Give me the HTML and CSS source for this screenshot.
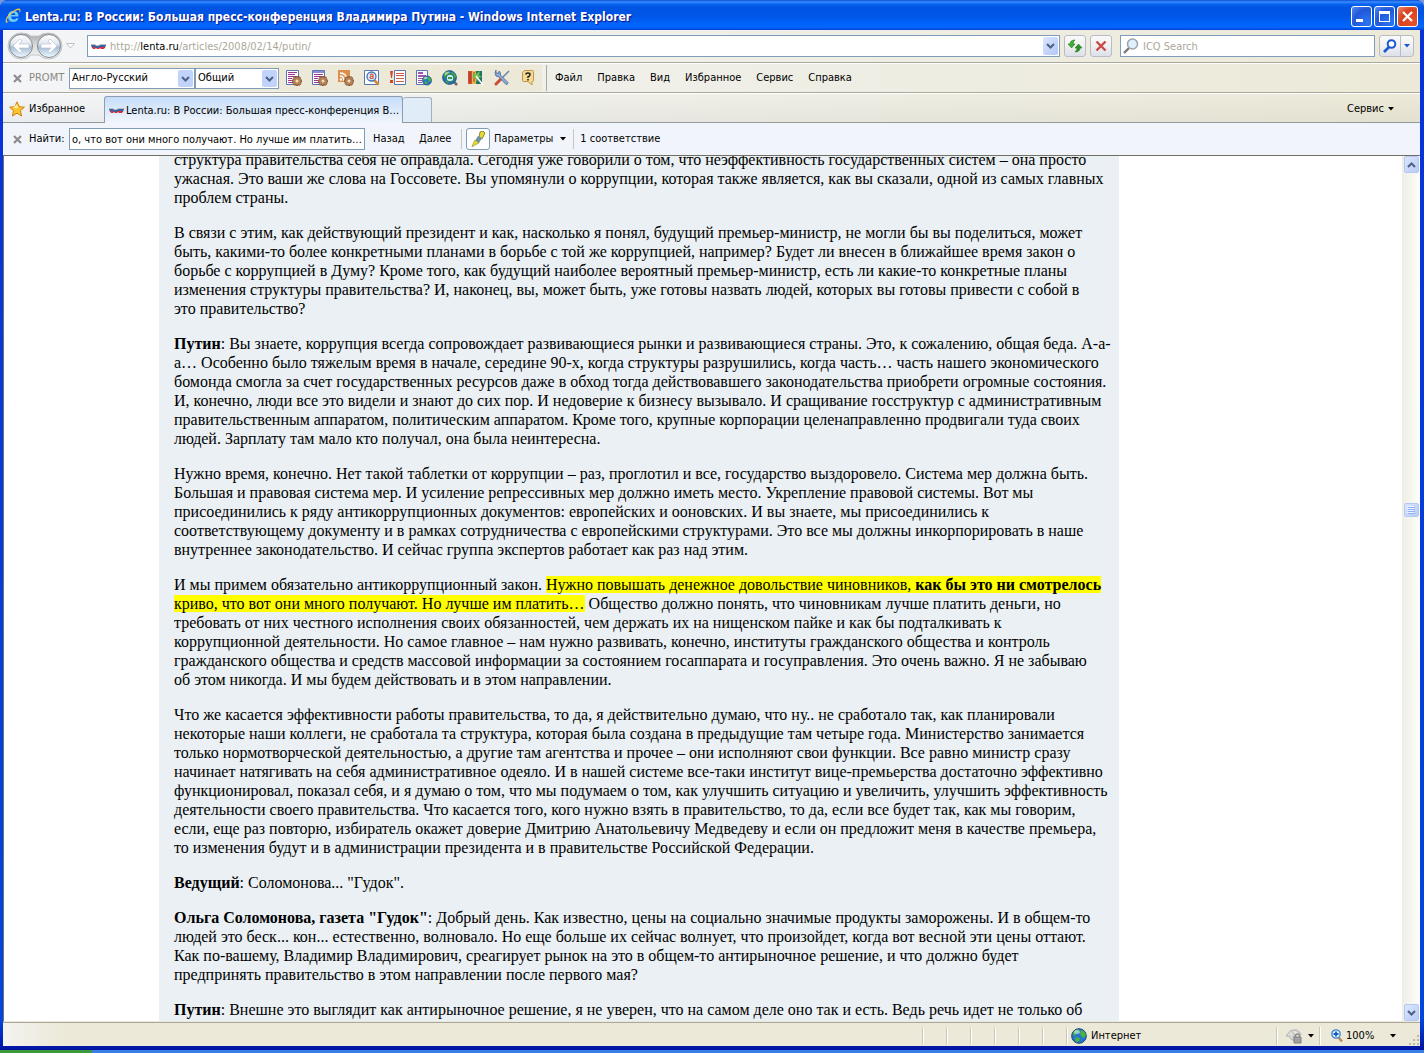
FILE: index.html
```html
<!DOCTYPE html>
<html lang="ru">
	<head>
		<meta charset="UTF-8" />
		<meta name="viewport" content="width=device-width, initial-scale=1.0" />
		<title>Lenta.ru: В России: Большая пресс-конференция Владимира Путина</title>
		<link rel="stylesheet" href="styles.css">
	</head>

	<body>
		<!-- formes réutilisées par plusieurs icônes -->
		<svg class="defs" aria-hidden="true">
			<symbol id="gear" viewBox="0 0 10 10">
				<path d="M4 0h2v1.500l1.500-.8L8.800 2 8 3.700l2 .3v2l-1.700.4.7 1.500-1.500 1.500L6 8.500V10H4V8.500l-1.600.8L1 7.800l.8-1.500L0 6V4l1.700-.4L1 2.200 2.300.8 4 1.500z" fill="#b58254" stroke="#6b4526" stroke-width=".6" />
				<circle cx="5" cy="5" r="1.500" fill="#f2dcc0" />
			</symbol>
			<symbol id="flag" viewBox="0 0 15 7">
				<path d="M0 1h4l1 1h3l1-1h6v2H0z" fill="#b9c0c8" />
				<path d="M0 2h4l1 1h3l1-1h6l-1 3H1z" fill="#3b60a2" />
				<path d="M1 4h3l1 1h3l1-1h5l-1 2h-3l-1-1-1 1H6L5 5 4 6H2z" fill="#d6303a" />
			</symbol>
			<symbol id="close" viewBox="0 0 9 9">
				<path d="M1 1l7 7M8 1L1 8" stroke="#8c8c8c" stroke-width="2.200" />
			</symbol>
			<symbol id="down" viewBox="0 0 6 4">
				<path d="M0 0h6L3 3.500z" fill="currentColor" />
			</symbol>
			<symbol id="globe" viewBox="0 0 16 16">
				<circle cx="8" cy="8" r="7.300" fill="#2873cd" stroke="#174574" />
				<path d="M2 5q2-4 6-3.500L7 4 5 5 4 8 2 7zM10 2q4 1 5 5l-2 3-2-1-2-3zM5 9l4 1-1 3-2 1.500-2-2z" fill="#47b53c" />
				<ellipse cx="6" cy="4" rx="3" ry="2" fill="#fff" opacity=".5" />
			</symbol>
		</svg>

		<div class="window">
			<header class="titlebar">
				<svg class="title-logo" viewBox="0 0 16 16">
					<path d="M13.500 8.500H6q.5 3 3 3 1.500 0 2.200-1.200h2.300Q12.500 14 8.500 14 3 14 3 8.500T8.500 3q5.200 0 5 5.500zM6 7h4.500Q10.300 5 8.500 5 6.500 5 6 7z" fill="#6ccbf7" fill-rule="evenodd" />
					<path d="M4.500 13Q1 16 .5 13.500.5 9 6 4.500T14.500.5Q16.500 2 14.500 5.500 15 3 14 2 11.500 1.500 7 5T1.700 12.500Q2 14.500 4.500 13z" fill="#fbc63d" />
				</svg>
				<h1>Lenta.ru: В России: Большая пресс-конференция Владимира Путина - Windows Internet Explorer</h1>
				<button class="win-btn" aria-label="Свернуть"><svg viewBox="0 0 19 19"><path d="M4 12h7v3H4z" fill="#fff" /></svg></button>
				<button class="win-btn" aria-label="Развернуть"><svg viewBox="0 0 19 19"><path d="M4 4h11v11H4zM5 7v7h9V7z" fill="#fff" fill-rule="evenodd" /></svg></button>
				<button class="win-btn win-close" aria-label="Закрыть"><svg viewBox="0 0 19 19"><path d="M5 5l9 9M14 5l-9 9" stroke="#fff" stroke-width="2.200" /></svg></button>
			</header>

			<form class="bar address-bar">
				<svg class="back-forward" viewBox="0 0 56 28">
					<defs>
						<linearGradient id="ball" x2="0" y2="1">
							<stop offset="0" stop-color="#ffffff" />
							<stop offset=".4" stop-color="#e3e9ef" />
							<stop offset=".55" stop-color="#a9bed6" />
							<stop offset="1" stop-color="#f0fbff" />
						</linearGradient>
						<linearGradient id="frame" x2="0" y2="1">
							<stop offset="0" stop-color="#a4a6a8" />
							<stop offset=".5" stop-color="#dcdede" />
							<stop offset="1" stop-color="#f4f4f4" />
						</linearGradient>
					</defs>
					<path d="M14 1q7 0 10 3h8q3-3 10-3a13 13 0 010 26q-7 0-10-4h-8q-3 4-10 4A13 13 0 0114 1z" fill="url(#frame)" stroke="#c4c6c8" />
					<circle cx="14" cy="14" r="11.500" fill="url(#ball)" stroke="#838b92" />
					<circle cx="42" cy="14" r="11.500" fill="url(#ball)" stroke="#838b92" />
					<path d="M6 14l7-7 2 2-3 3h10v4H12l3 3-2 2zM50 14l-7-7-2 2 3 3H34v4h10l-3 3 2 2z" fill="#fff" stroke="#b3c0cd" stroke-width=".6" />
				</svg>
				<svg class="history" viewBox="0 0 9 6"><path d="M.5.5h8l-4 4.500z" fill="#fff" stroke="#c2c2c2" /></svg>
				<div class="url">
					<svg class="flag"><use href="#flag" /></svg>
					<a href="#">http://<b>lenta.ru</b>/articles/2008/02/14/putin/</a>
					<button type="button" class="drop" aria-label="Журнал адресов"><svg viewBox="0 0 9 6"><path d="M1 1l3.500 3.500L8 1" fill="none" stroke="#4d6185" stroke-width="2" /></svg></button>
				</div>
				<button type="button" class="nav-btn" aria-label="Обновить">
					<svg viewBox="0 0 16 16"><path d="M1 6h2q0-4 5-4-2 1.500-2 4h2l-3.500 4z" fill="#3fae38" stroke="#1c7d1c" stroke-width=".6" /><path d="M15 10h-2q0 4-5 4 2-1.500 2-4H8l3.500-4z" fill="#2c8f28" stroke="#1c7d1c" stroke-width=".6" /></svg>
				</button>
				<button type="button" class="nav-btn" aria-label="Остановить">
					<svg viewBox="0 0 16 16"><path d="M3.500 3.500l9 9M12.500 3.500l-9 9" stroke="#c94a44" stroke-width="2.400" /></svg>
				</button>
				<div class="search">
					<svg viewBox="0 0 16 16"><path d="M1 15l5-5" stroke="#777" stroke-width="2.400" /><circle cx="9.500" cy="6" r="5" fill="#dff1fc" stroke="#9ba3ab" stroke-width="1.500" /></svg>
					<input type="text" placeholder="ICQ Search" aria-label="Поиск">
				</div>
				<div class="search-btns">
					<button type="button" aria-label="Искать"><svg viewBox="0 0 14 14"><path d="M1 13l5-5" stroke="#1c57d8" stroke-width="2.600" /><circle cx="8.500" cy="5" r="3.800" fill="#fff" stroke="#1c57d8" stroke-width="2" /></svg></button>
					<button type="button" class="narrow" aria-label="Параметры поиска"><svg class="down"><use href="#down" /></svg></button>
				</div>
			</form>

			<div class="bar tool-bar">
				<button class="plain" aria-label="Закрыть панель"><svg class="close"><use href="#close" /></svg></button>
				<label class="promt" for="lang">PROMT</label>
				<div class="promt-tools">
					<select id="lang">
						<option>Англо-Русский</option>
					</select>
					<select id="theme" aria-label="Тематика">
						<option>Общий</option>
					</select>
					<div class="icons">
						<button class="plain" aria-label="Перевести"><svg viewBox="0 0 16 16"><path d="M.5.5h12v14H.5z" fill="#fff" stroke="#5676b5" /><path d="M2 2.500h9M2 4.500h7M2 6.500h9M2 8.500h4M2 10.500h4M2 12.500h5" stroke="#a0348f" /><use href="#gear" x="6" y="6" width="10" height="10" /></svg></button>
						<button class="plain" aria-label="Перевести страницу"><svg viewBox="0 0 16 16"><path d="M.5.5h12v14H.5z" fill="#fff" stroke="#5676b5" /><path d="M1 1h11v2H1z" fill="#8b8fd0" /><path d="M2 4.500h9M2 6.500h9M2 8.500h4M2 10.500h4M2 12.500h5" stroke="#a0348f" /><use href="#gear" x="6" y="6" width="10" height="10" /></svg></button>
						<button class="plain" aria-label="Перевести ленту"><svg viewBox="0 0 16 16"><path d="M0 0h12v12H0z" fill="#de8f4c" /><path d="M2 3q7 0 7 8M2 6q4 0 4 5" stroke="#fff" stroke-width="1.500" fill="none" /><circle cx="3" cy="9.500" r="1.300" fill="#fff" /><use href="#gear" x="6" y="6" width="10" height="10" /></svg></button>
						<button class="plain" aria-label="Найти перевод"><svg viewBox="0 0 16 16"><path d="M.5.5h14v14H.5z" fill="#fff" stroke="#5676b5" /><path d="M10 10l4.500 4.500" stroke="#d98a32" stroke-width="2.500" /><circle cx="7.500" cy="6.500" r="4.500" fill="#d7edfc" stroke="#4674ae" stroke-width="1.300" /><path d="M6 5q1.500-1.500 3 0v3.500H6.500q-1-1 0-2H9" fill="none" stroke="#d95542" stroke-width="1.200" /></svg></button>
						<button class="plain" aria-label="Незнакомые слова"><svg viewBox="0 0 16 16"><path d="M4.500.5h11v14h-11z" fill="#fff" stroke="#5676b5" /><path d="M6 3.500h8M6 5.500h8M6 8.500h8M6 11.500h8" stroke="#d15842" /><path d="M0 1h3l-1 7H1zM0 10h3v3H0z" fill="#cf482d" /></svg></button>
						<button class="plain" aria-label="Веб-перевод"><svg viewBox="0 0 16 16"><path d="M.5.5h11v14H.5z" fill="#fff" stroke="#5676b5" /><path d="M2 2h5v2H2zM2 5h8v2H2zM2 8h5v1H2zM2 10h4v1H2zM2 12h4v1H2z" fill="#a455b0" /><use href="#globe" x="6" y="5" width="10" height="11" /></svg></button>
						<button class="plain" aria-label="Поиск в Интернете"><svg viewBox="0 0 16 16"><path d="M11 11l4 4" stroke="#6b6b6b" stroke-width="2.500" /><use href="#globe" width="15" height="15" /><circle cx="8" cy="8" r="4" fill="#c6eaf7" stroke="#23765d" stroke-width="1.500" /><path d="M6 8h4" stroke="#389a42" stroke-width="2" /></svg></button>
						<button class="plain" aria-label="Словари"><svg viewBox="0 0 16 16"><path d="M0 1h4v13H0z" fill="#cf4c35" /><path d="M4 1h4v13H4z" fill="#e6b74a" /><path d="M8 1h6v13H8z" fill="#1f7468" /><path d="M2 2v10M6 2v10" stroke="#9a3d2a" /><path d="M5 3l3 1 4-3-1 4 3 2-4 1-1 4-2-4-3-1 2-2z" fill="#6fbe53" /><path d="M8 6l7 9" stroke="#fff" stroke-width="1.500" /></svg></button>
						<button class="plain" aria-label="Настройка"><svg viewBox="0 0 16 16"><path d="M15 1L7 9" stroke="#6d86a7" stroke-width="1.600" /><path d="M7 9l-5 5" stroke="#c94c38" stroke-width="3" stroke-linecap="round" /><path d="M2 0v3h3V1q2 1 1.500 4L14 12.500q0 2-2 2L5 7Q1 7 1 3z" fill="#8faad0" stroke="#4b6a97" stroke-width=".8" /></svg></button>
						<button class="plain" aria-label="Помощь"><svg viewBox="0 0 16 16"><path d="M4.500.5h8q1 0 1 1v9q0 1-1 1H12V15l-4-3.500H3.500q-1 0-1-1v-8z" fill="#f7da91" stroke="#bb964f" /><path d="M6 4.500Q6 3 8 3t2 1.500T8 7v1M8 9v1.500" fill="none" stroke="#222" stroke-width="1.600" /></svg></button>
					</div>
				</div>
				<nav class="menu">
					<a href="#">Файл</a>
					<a href="#">Правка</a>
					<a href="#">Вид</a>
					<a href="#">Избранное</a>
					<a href="#">Сервис</a>
					<a href="#">Справка</a>
				</nav>
			</div>

			<div class="bar tab-bar">
				<button class="plain favorites">
					<svg viewBox="0 0 16 16"><path d="M8 .8l2.100 4.900 5.300.5-4 3.500 1.200 5.300L8 12.200 3.400 15l1.200-5.300-4-3.500 5.300-.5z" fill="#ffc52d" stroke="#cf8115" /><path d="M8 3l1 4H4z" fill="#fff0a6" /></svg>
					Избранное
				</button>
				<a class="tab" href="#"><svg class="flag"><use href="#flag" /></svg>Lenta.ru: В России: Большая пресс-конференция В…</a>
				<button class="new-tab" aria-label="Новая вкладка"></button>
				<button class="plain service">Сервис <svg class="down"><use href="#down" /></svg></button>
			</div>

			<form class="bar find-bar">
				<button type="button" class="plain" aria-label="Закрыть поиск"><svg class="close"><use href="#close" /></svg></button>
				<label for="find">Найти:</label>
				<input id="find" type="text" value="о, что вот они много получают. Но лучше им платить…">
				<button type="button" class="plain prev">Назад</button>
				<button type="button" class="plain next">Далее</button>
				<button type="button" class="marker" aria-label="Выделить">
					<svg viewBox="0 0 16 16"><path d="M10 1l3-1 2 2-3 6-3-2z" fill="#ead92e" stroke="#66772f" stroke-width=".8" /><path d="M8 5l4 2-3 5-4-2z" fill="#6c93a2" /><path d="M5 9l4 3-4 2-3 2 1-3z" fill="#ead92e" stroke="#8a8a28" stroke-width=".6" /></svg>
				</button>
				<button type="button" class="plain params">Параметры <svg class="down"><use href="#down" /></svg></button>
				<output for="find">1 соответствие</output>
			</form>

			<div class="view">
				<main>
					<article>
						<p>структура правительства себя не оправдала. Сегодня уже говорили о том, что неэффективность государственных систем – она просто ужасная. Это ваши же слова на Госсовете. Вы упомянули о коррупции, которая также является, как вы сказали, одной из самых главных проблем страны.</p>
						<p>В связи с этим, как действующий президент и как, насколько я понял, будущий премьер-министр, не могли бы вы поделиться, может быть, какими-то более конкретными планами в борьбе с той же коррупцией, например? Будет ли внесен в ближайшее время закон о борьбе с коррупцией в Думу? Кроме того, как будущий наиболее вероятный премьер-министр, есть ли какие-то конкретные планы изменения структуры правительства? И, наконец, вы, может быть, уже готовы назвать людей, которых вы готовы привести с собой в<br>это правительство?</p>
						<p><b>Путин</b>: Вы знаете, коррупция всегда сопровождает развивающиеся рынки и развивающиеся страны. Это, к сожалению, общая беда. А-а-<br>а… Особенно было тяжелым время в начале, середине 90-х, когда структуры разрушились, когда часть… часть нашего экономического<br>бомонда смогла за счет государственных ресурсов даже в обход тогда действовавшего законодательства приобрети огромные состояния.<br>И, конечно, люди все это видели и знают до сих пор. И недоверие к бизнесу вызывало. И сращивание госструктур с административным<br>правительственным аппаратом, политическим аппаратом. Кроме того, крупные корпорации целенаправленно продвигали туда своих<br>людей. Зарплату там мало кто получал, она была неинтересна.</p>
						<p>Нужно время, конечно. Нет такой таблетки от коррупции – раз, проглотил и все, государство выздоровело. Система мер должна быть. Большая и правовая система мер. И усиление репрессивных мер должно иметь место. Укрепление правовой системы. Вот мы присоединились к ряду антикоррупционных документов: европейских и ооновских. И вы знаете, мы присоединились к соответствующему документу и в рамках сотрудничества с европейскими структурами. Это все мы должны инкорпорировать в наше внутреннее законодательство. И сейчас группа экспертов работает как раз над этим.</p>
						<p>И мы примем обязательно антикоррупционный закон. <mark>Нужно повышать денежное довольствие чиновников, <b>как бы это ни смотрелось</b> криво, что вот они много получают. Но лучше им платить…</mark> Общество должно понять, что чиновникам лучше платить деньги, но требовать от них честного исполнения своих обязанностей, чем держать их на нищенском пайке и как бы подталкивать к<br>коррупционной деятельности. Но самое главное – нам нужно развивать, конечно, институты гражданского общества и контроль<br>гражданского общества и средств массовой информации за состоянием госаппарата и госуправления. Это очень важно. Я не забываю<br>об этом никогда. И мы будем действовать и в этом направлении.</p>
						<p>Что же касается эффективности работы правительства, то да, я действительно думаю, что ну.. не сработало так, как планировали некоторые наши коллеги, не сработала та структура, которая была создана в предыдущие там четыре года. Министерство занимается только нормотворческой деятельностью, а другие там агентства и прочее – они исполняют свои функции. Все равно министр сразу начинает натягивать на себя административное одеяло. И в нашей системе все-таки институт вице-премьерства достаточно эффективно функционировал, показал себя, и я думаю о том, что мы подумаем о том, как улучшить ситуацию и увеличить, улучшить эффективность деятельности своего правительства. Что касается того, кого нужно взять в правительство, то да, если все будет так, как мы говорим, если, еще раз повторю, избиратель окажет доверие Дмитрию Анатольевичу Медведеву и если он предложит меня в качестве премьера, то изменения будут и в администрации президента и в правительстве Российской Федерации.</p>
						<p><b>Ведущий</b>: Соломонова... "Гудок".</p>
						<p><b>Ольга Соломонова, газета "Гудок"</b>: Добрый день. Как известно, цены на социально значимые продукты заморожены. И в общем-то людей это беск... кон... естественно, волновало. Но еще больше их сейчас волнует, что произойдет, когда вот весной эти цены оттают. Как по-вашему, Владимир Владимирович, среагирует рынок на это в общем-то антирыночное решение, и что должно будет<br>предпринять правительство в этом направлении после первого мая?</p>
						<p><b>Путин</b>: Внешне это выглядит как антирыночное решение, я не уверен, что на самом деле оно так и есть. Ведь речь идет не только об</p>
					</article>
				</main>
				<div class="scrollbar">
					<button aria-label="Вверх"><svg viewBox="0 0 9 6"><path d="M1 5l3.500-3.500L8 5" fill="none" stroke="#4d6185" stroke-width="2" /></svg></button>
					<div class="track-before"></div>
					<div class="thumb"><svg viewBox="0 0 8 8"><path d="M0 .5h7M0 2.500h7M0 4.500h7M0 6.500h7" stroke="#eef4fe" /><path d="M1 1.500h7M1 3.500h7M1 5.500h7M1 7.500h7" stroke="#8cb0f8" /></svg></div>
					<div class="track-after"></div>
					<button aria-label="Вниз"><svg viewBox="0 0 9 6"><path d="M1 1l3.500 3.500L8 1" fill="none" stroke="#4d6185" stroke-width="2" /></svg></button>
				</div>
			</div>

			<footer class="status">
				<i></i><i></i><i></i><i></i><i></i><i></i>
				<span class="zone"><svg viewBox="0 0 16 16"><use href="#globe" /></svg>Интернет</span>
				<button class="plain protect" aria-label="Защита"><svg viewBox="0 0 16 16"><path d="M0 8l5-6 5 6H7q0 3 2 5-5-1-6-5z" fill="#dcdcdc" stroke="#b0b0b0" /><path d="M6 3q5-3 9 4" fill="none" stroke="#c4c4c4" stroke-width="2" /><path d="M8 9h7v6H8z" fill="#a2a2a2" stroke="#808080" /><path d="M9.500 9V7q2-2 4 0v2" fill="none" stroke="#8a8a8a" stroke-width="1.500" /></svg><svg class="down"><use href="#down" /></svg></button>
				<button class="plain zoom"><svg viewBox="0 0 12 14"><path d="M7 8l4 4.500" stroke="#b98b55" stroke-width="2.500" /><circle cx="5" cy="5" r="4.200" fill="#e5f4ff" stroke="#3b82ce" stroke-width="1.300" /><path d="M2.500 5h5M5 2.500v5" stroke="#165cc0" stroke-width="1.800" /></svg>100%<svg class="down"><use href="#down" /></svg></button>
				<svg class="grip" viewBox="0 0 12 12"><path d="M9 1h2v2H9zM5 5h2v2H5zM9 5h2v2H9zM1 9h2v2H1zM5 9h2v2H5zM9 9h2v2H9z" fill="#bdb8a4" /></svg>
			</footer>
		</div>

		<div class="taskbar"><span></span></div>
	</body>
</html>
```
FILE: styles.css
```css
* {
	box-sizing: border-box;
}
body {
	display: flex;
	flex-direction: column;
	height: 100vh;
	margin: 0;
	overflow: hidden;
	background: #7a96df;
	font-family: "DejaVu Sans Condensed", "DejaVu Sans", sans-serif;
	font-size: 11px;
	line-height: 14px;
	color: #000;
}
svg {
	display: block;
	flex: none;
}
button,
input,
select {
	font: inherit;
	color: inherit;
	margin: 0;
}
a {
	color: inherit;
	text-decoration: none;
}
.defs {
	position: absolute;
	width: 0;
	height: 0;
}
.window {
	display: flex;
	flex-direction: column;
	flex: 1;
	min-height: 0;
	padding: 0 4px 4px 3px;
	background: linear-gradient(#0831d9, #0046e0 97%, #0013a0);
	border-radius: 8px 8px 0 0;
}

/* barre de titre */
.titlebar {
	display: flex;
	align-items: center;
	gap: 2px;
	height: 30px;
	flex: none;
	margin: 0 -4px 0 -3px;
	padding: 2px 6px 0 5px;
	border-radius: 8px 8px 0 0;
	background: linear-gradient(#0b50cf 0, #3a8bff 2px, #0866f0 4px, #0054e3 7px, #0055e5 15px, #0066ff 25px, #0260f5 28px, #003dd7 30px);
}
.title-logo {
	width: 16px;
	height: 16px;
}
.titlebar h1 {
	flex: 1;
	margin: 2px 0 0 2px;
	font-size: 12px;
	line-height: 16px;
	color: #fff;
	text-shadow: 1px 1px 1px #0f1089;
	white-space: nowrap;
	overflow: hidden;
}
.win-btn {
	width: 21px;
	height: 21px;
	padding: 0;
	border: 1px solid #fff;
	border-radius: 3px;
	background: radial-gradient(circle at 80% 80%, #2a75f5, #2257d8 60%, #5a8cf0);
}
.win-close {
	background: radial-gradient(circle at 80% 80%, #e8502a, #d9431f 60%, #ee8f74);
}

/* barres d'outils */
.bar {
	display: flex;
	align-items: center;
	flex: none;
	background: linear-gradient(90deg, #f3f5f8, #f0f0ea 40%, #ece9d8);
	white-space: nowrap;
}
.plain {
	display: flex;
	align-items: center;
	padding: 0;
	border: 0;
	background: none;
}
.flag {
	width: 15px;
	height: 7px;
}
.close {
	width: 9px;
	height: 9px;
}
.down {
	width: 6px;
	height: 4px;
}
.address-bar {
	height: 33px;
	padding: 0 6px 0 4px;
	border-bottom: 1px solid #aca899;
}
.back-forward {
	width: 56px;
	height: 28px;
}
.history {
	width: 9px;
	height: 6px;
	margin: 0 12px 0 3px;
}
.url,
.search {
	display: flex;
	align-items: center;
	height: 22px;
	border: 1px solid #7f9db9;
	background: #fff;
}
.url {
	flex: 1;
	padding: 0 1px 0 3px;
	gap: 4px;
	color: #aca899;
}
.url a {
	flex: 1;
	padding-top: 1px;
}
.url b {
	font-weight: normal;
	color: #000;
}
.drop {
	display: grid;
	place-items: center;
	width: 15px;
	height: 18px;
	padding: 0;
	border: 0;
	border-radius: 2px;
	background: linear-gradient(135deg, #dbe5fd, #b3c8f7);
}
.drop svg,
.scrollbar button svg {
	width: 9px;
	height: 6px;
}
.nav-btn,
.search-btns button {
	display: grid;
	place-items: center;
	width: 22px;
	height: 22px;
	padding: 0;
	border: 1px solid #b9bcc4;
	border-radius: 3px;
	background: linear-gradient(#fafafa, #f0f0f0 50%, #dde0ea);
}
.nav-btn {
	margin-left: 4px;
}
.nav-btn svg {
	width: 16px;
	height: 16px;
}
.search {
	width: 255px;
	margin: 0 4px 0 8px;
	padding-left: 2px;
	gap: 4px;
}
.search svg {
	width: 16px;
	height: 16px;
}
.search input {
	flex: 1;
	min-width: 0;
	padding: 1px 0 0;
	border: 0;
	background: none;
}
.search input::placeholder {
	color: #aca899;
}
.search-btns {
	display: flex;
}
.search-btns svg {
	width: 14px;
	height: 14px;
}
.search-btns button:first-child {
	border-radius: 3px 0 0 3px;
}
.search-btns .narrow {
	width: 14px;
	margin-left: -1px;
	border-radius: 0 3px 3px 0;
	color: #1c57d8;
}
.search-btns .down {
	width: 6px;
	height: 4px;
}
.tool-bar {
	height: 30px;
	padding-left: 10px;
	border-top: 1px solid #fff;
	border-bottom: 1px solid #aca899;
}
.promt {
	width: 37px;
	margin: 0 3px 0 7px;
	color: #8a887e;
}
.promt-tools {
	display: flex;
	align-items: center;
	height: 26px;
	padding-right: 6px;
	background: #ece9d8;
}
select {
	width: 126px;
	height: 21px;
	padding: 0 18px 0 2px;
	border: 1px solid #7f9db9;
	border-radius: 0;
	appearance: none;
	background: #fff url("data:image/svg+xml,%3Csvg xmlns='http://www.w3.org/2000/svg' width='15' height='17'%3E%3Crect width='15' height='17' rx='2' fill='%23c1d3fb'/%3E%3Cpath d='M4 7l3.500 3.500L11 7' fill='none' stroke='%234d6185' stroke-width='2'/%3E%3C/svg%3E") no-repeat right 1px center;
}
#theme {
	width: 84px;
}
.icons {
	display: flex;
	gap: 10px;
	padding-left: 7px;
}
.icons svg {
	width: 16px;
	height: 16px;
}
.menu {
	display: flex;
	gap: 15px;
	margin-left: 4px;
	padding: 6px 8px;
	border-left: 1px solid #aca899;
}

/* onglets */
.tab-bar {
	height: 30px;
	align-items: stretch;
	border-top: 1px solid #fff;
	background: linear-gradient(transparent, #0000000a), linear-gradient(90deg, #f3f5f8, #f0f0ea 40%, #ece9d8);
	box-shadow: inset 0 -1px #919b9c;
}
.favorites {
	width: 101px;
	gap: 4px;
	padding-left: 6px;
}
.favorites svg {
	width: 16px;
	height: 16px;
}
.tab {
	display: flex;
	align-items: center;
	width: 299px;
	gap: 2px;
	margin-top: 2px;
	padding: 1px 0 0 4px;
	border: 1px solid #919bb0;
	border-bottom: 0;
	border-radius: 3px 3px 0 0;
	background: linear-gradient(#c5defa, #f1f5fb);
}
.new-tab {
	width: 29px;
	margin: 3px 0 1px;
	padding: 0;
	border: 1px solid #a3adbd;
	border-width: 1px 1px 0 0;
	border-radius: 3px 3px 0 0;
	background: #e1ecf9;
}
.service {
	gap: 4px;
	margin-left: auto;
	padding-right: 26px;
}

/* recherche dans la page */
.find-bar {
	height: 32px;
	padding-left: 10px;
	background: #f1f5fb;
}
.find-bar label {
	width: 36px;
	margin: 0 4px 0 7px;
}
.find-bar input {
	width: 296px;
	height: 22px;
	padding: 1px 0 0 2px;
	border: 1px solid #7f9db9;
	background: #fff;
}
.prev {
	width: 46px;
	padding-left: 8px;
}
.next {
	width: 51px;
	padding-left: 8px;
	height: 20px;
	border-right: 1px solid #c9c7ba;
}
.marker {
	width: 24px;
	height: 22px;
	margin: 0 4px;
	padding: 2px 3px;
	border: 1px solid #7f9db9;
	border-radius: 3px;
	background: #fff;
}
.marker svg {
	width: 16px;
	height: 16px;
}
.params {
	height: 20px;
	gap: 7px;
	padding-right: 7px;
	border-right: 1px solid #c9c7ba;
}
.find-bar output {
	padding-left: 6px;
}

/* page */
.view {
	display: flex;
	flex: 1;
	min-height: 0;
	border: 1px solid #716f64;
	border-right: 0;
	border-bottom-color: #ece9d8;
	background: #fff;
}
main {
	flex: 1;
	overflow: hidden;
	padding-left: 155px;
}
article {
	max-width: 960px;
	/* page défilée au milieu du premier paragraphe */
	margin-top: -6px;
	padding: 0 6px 16px 15px;
	background: #eaf0f4;
	font: 16px/19px "Liberation Serif", serif;
}
article p {
	margin: 0 0 16px;
}
mark {
	background: #ff0;
	color: inherit;
}
.scrollbar {
	display: flex;
	flex-direction: column;
	align-items: center;
	width: 18px;
	background: linear-gradient(90deg, #eeede5, #fefefb);
}
.scrollbar button,
.thumb {
	display: grid;
	place-items: center;
	width: 15px;
	height: 17px;
	padding: 0;
	border: 1px solid #b4c8f6;
	border-radius: 2px;
	background: linear-gradient(135deg, #dbe5fd, #b9cbf7);
}
.thumb {
	height: 14px;
}
.thumb svg {
	width: 8px;
	height: 8px;
}
.track-before {
	flex: 330;
}
.track-after {
	flex: 487;
}

/* barre d'état */
.status {
	display: flex;
	align-items: center;
	justify-content: flex-end;
	flex: none;
	height: 24px;
	padding-top: 2px;
	border-top: 1px solid #aca899;
	background: linear-gradient(90deg, #f3f3f1, #ece9d8 60px);
}
.status i {
	width: 24px;
	height: 18px;
	border-left: 1px solid #cbc7b8;
	box-shadow: inset 1px 0 #fff;
}
.zone,
.protect,
.zoom {
	display: flex;
	align-items: center;
	height: 18px;
	border-left: 1px solid #cbc7b8;
	box-shadow: inset 1px 0 #fff;
}
.zone {
	gap: 4px;
	width: 210px;
	padding-left: 4px;
}
.zone svg {
	width: 16px;
	height: 16px;
}
.protect {
	width: 43px;
	gap: 6px;
	padding-left: 9px;
}
.protect svg:first-child {
	width: 16px;
	height: 16px;
}
.zoom {
	width: 89px;
	gap: 3px;
	padding-left: 11px;
}
.zoom svg:first-child {
	width: 12px;
	height: 14px;
}
.zoom .down {
	margin-left: auto;
	margin-right: 12px;
}
.grip {
	width: 12px;
	height: 12px;
	align-self: flex-end;
}
.taskbar {
	flex: none;
	height: 3px;
	background: #3b7fe6;
}
.taskbar span {
	display: block;
	width: 92px;
	height: 3px;
	background: #3c9a3c;
}
```
